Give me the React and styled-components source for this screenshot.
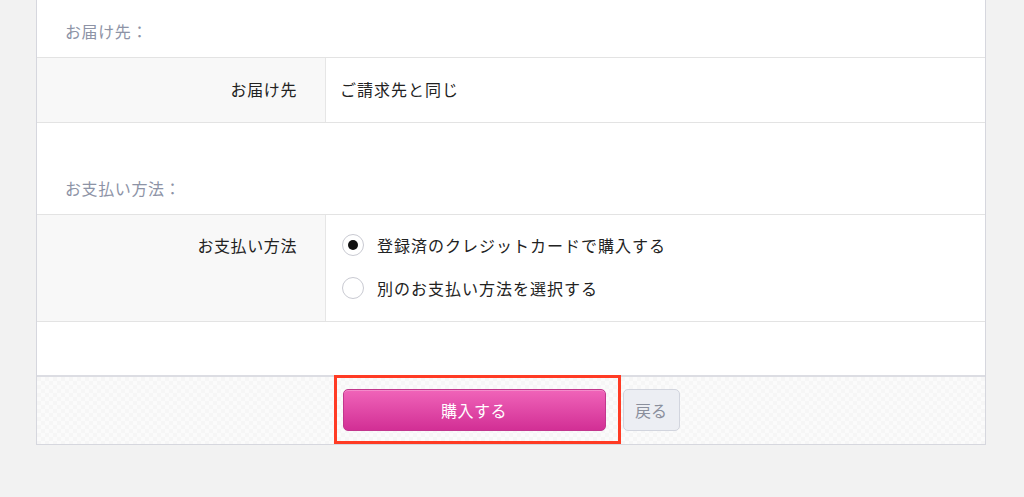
import React from "react";
import styled, { createGlobalStyle } from "styled-components";

const GlobalStyle = createGlobalStyle`
  html, body {
    margin: 0;
    padding: 0;
    background: #f2f2f2;
    font-family: "Noto Sans CJK JP", "Noto Sans", sans-serif;
    color: #222;
  }
`;

const Page = styled("div")`
  height: 497px;
  overflow: hidden;
`;

const Panel = styled("div")`
  margin: -34px 0 0 36px;
  width: 948px;
  background: #ffffff;
  border: 1px solid #d6d7de;
  border-top: none;
`;

const SectionTitle = styled("div")`
  padding: 54px 28px 15px;
  line-height: 22px;
  font-size: 16px;
  letter-spacing: 0.6px;
  color: #8d93a6;
  border-bottom: 1px solid #e3e3e3;
`;

const Row = styled("div")`
  display: flex;
  border-bottom: 1px solid #e3e3e3;
`;

const Label = styled("div")`
  width: 260px;
  flex-shrink: 0;
  padding: ${(p) => p.$pad};
  padding-right: 28px;
  background: #f8f8f8;
  border-right: 1px solid #e6e6e6;
  text-align: right;
  font-size: 16px;
  letter-spacing: 0.6px;
  line-height: 22px;
`;

const Value = styled("div")`
  flex: 1;
  padding: ${(p) => p.$pad};
  padding-left: 14px;
  font-size: 16px;
  letter-spacing: 1px;
  line-height: 22px;
`;

const RadioList = styled("div")`
  display: flex;
  flex-direction: column;
  gap: 21px;
  padding-left: 2px;
`;

const RadioItem = styled("label")`
  display: flex;
  align-items: center;
  gap: 13px;
  cursor: pointer;
`;

const RadioCircle = styled("span")`
  width: 22px;
  height: 22px;
  box-sizing: border-box;
  border-radius: 50%;
  border: 1px solid #c9cad2;
  background: #fff;
  display: flex;
  align-items: center;
  justify-content: center;

  &::after {
    content: "";
    width: 10px;
    height: 10px;
    border-radius: 50%;
    background: ${(p) => (p.$checked ? "#111" : "transparent")};
  }
`;

const Spacer = styled("div")`
  height: ${(p) => p.$h}px;
`;

const Footer = styled("div")`
  display: flex;
  justify-content: center;
  gap: 17px;
  padding: 12px 0 13px;
  border-top: 2px solid #dcdde3;
  background-color: #f6f6f6;
  background-image: linear-gradient(45deg, #fbfbfb 25%, transparent 25%, transparent 75%, #fbfbfb 75%),
    linear-gradient(45deg, #fbfbfb 25%, transparent 25%, transparent 75%, #fbfbfb 75%);
  background-size: 8px 8px;
  background-position: 0 0, 4px 4px;
`;

const ButtonWrap = styled("div")`
  position: relative;
`;

const Highlight = styled("span")`
  position: absolute;
  left: -9px;
  right: -15px;
  top: -14px;
  bottom: -13px;
  border: 3px solid #ff3b24;
  pointer-events: none;
`;

const PrimaryButton = styled("button")`
  display: block;
  width: 263px;
  height: 42px;
  border: 1px solid #c2378d;
  border-radius: 5px;
  background: linear-gradient(#f064b9, #d22f95);
  color: #fff;
  font-family: inherit;
  font-size: 16px;
  letter-spacing: 0.5px;
  box-shadow: inset 0 1px 0 rgba(255, 255, 255, 0.25);
  cursor: pointer;
`;

const BackButton = styled("button")`
  width: 57px;
  height: 42px;
  border: 1px solid #d2d5de;
  border-radius: 5px;
  background: #eceef3;
  color: #8a8f9c;
  font-family: inherit;
  font-size: 16px;
  cursor: pointer;
`;

function App() {
  return (
    <Page>
      <GlobalStyle />
      <Panel>
        <SectionTitle>お届け先：</SectionTitle>
        <Row>
          <Label $pad="20px 0 22px">お届け先</Label>
          <Value $pad="20px 0 22px">ご請求先と同じ</Value>
        </Row>

        <SectionTitle>お支払い方法：</SectionTitle>
        <Row>
          <Label $pad="19px 0 22px">お支払い方法</Label>
          <Value $pad="19px 0 22px">
            <RadioList>
              <RadioItem>
                <RadioCircle $checked />
                登録済のクレジットカードで購入する
              </RadioItem>
              <RadioItem>
                <RadioCircle />
                別のお支払い方法を選択する
              </RadioItem>
            </RadioList>
          </Value>
        </Row>

        <Spacer $h={53} />

        <Footer>
          <ButtonWrap>
            <PrimaryButton>購入する</PrimaryButton>
            <Highlight />
          </ButtonWrap>
          <BackButton>戻る</BackButton>
        </Footer>
      </Panel>
    </Page>
  );
}

export default App;
